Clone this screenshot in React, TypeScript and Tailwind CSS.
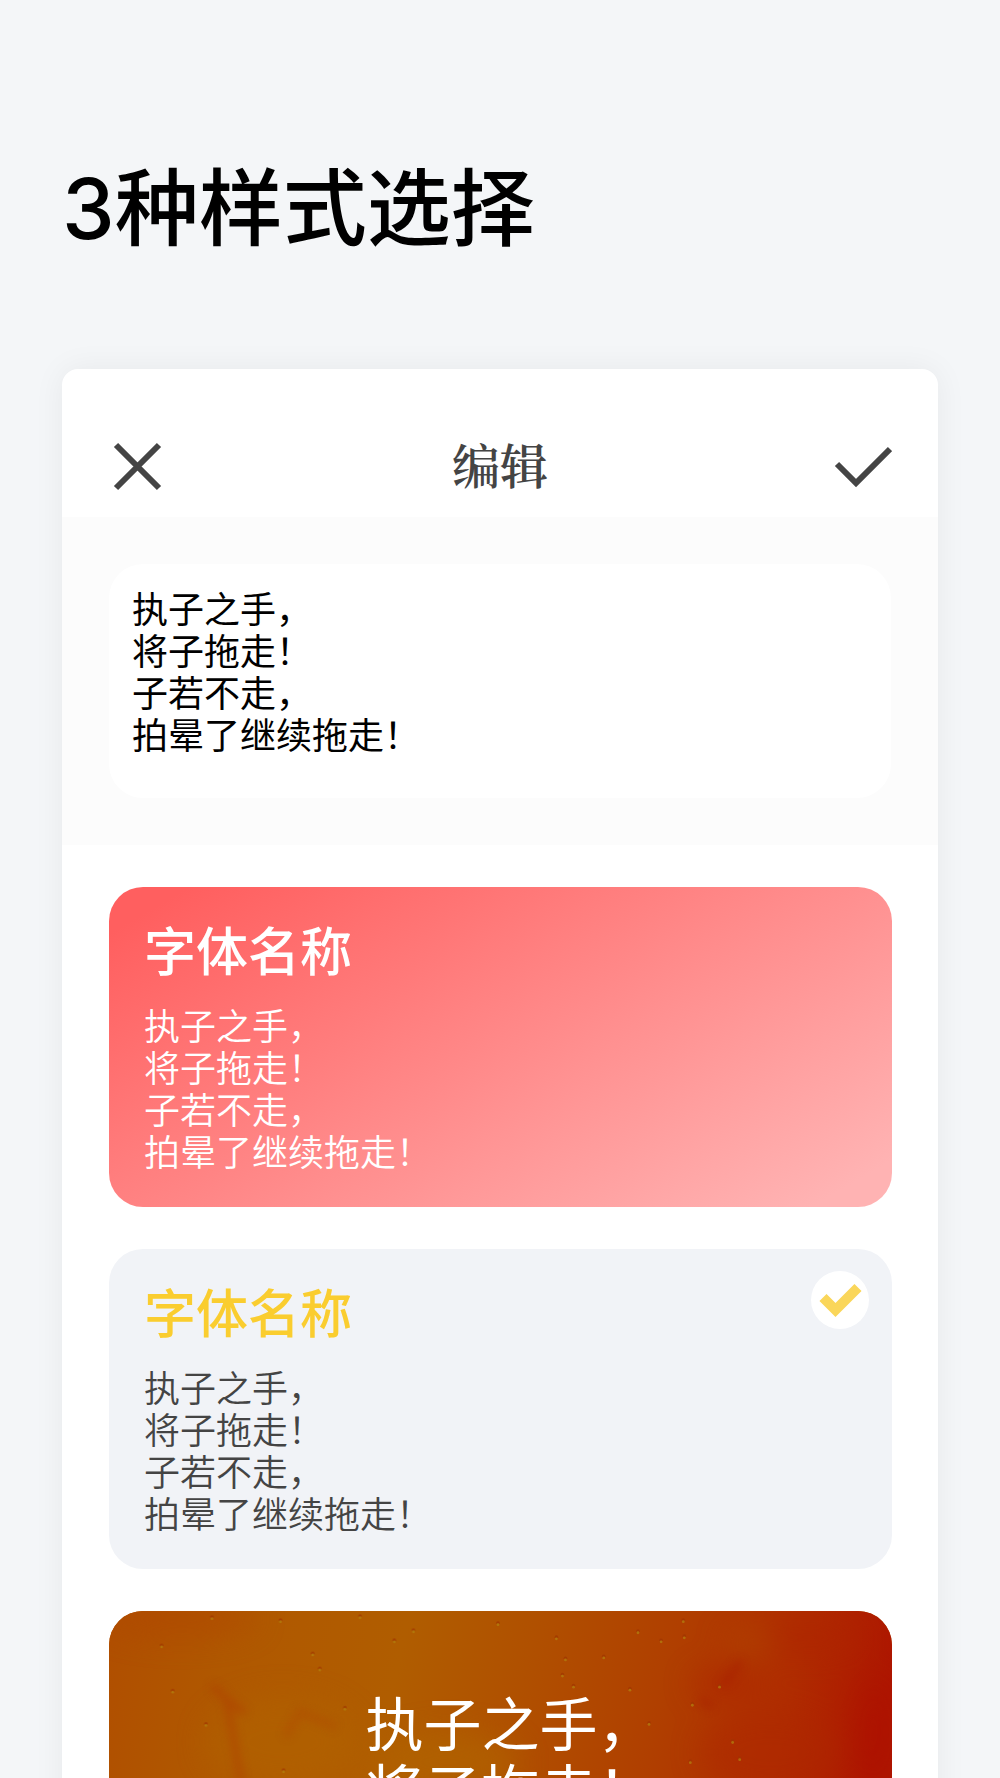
import { useState } from 'react';

const POEM = '执子之手，\n将子拖走！\n子若不走，\n拍晕了继续拖走！';

// air bubbles on the amber photo: x, y
const BUBBLES = [
    [55, 35], [105, 7], [173, 10], [205, 43], [212, 58], [66, 80], [99, 113], [237, 97],
    [176, 159], [252, 6], [305, 20], [286, 30], [389, 13], [447, 27], [528, 21], [573, 10],
    [574, 26], [551, 30], [494, 46], [456, 48], [453, 64], [464, 75], [520, 78], [609, 75],
    [539, 112], [580, 150], [629, 147], [622, 130], [582, 93],
];

interface StyleCardProps {
    value: string;
    label: string;
    selected: string;
    onSelect: (value: string) => void;
    className: string;
    children: React.ReactNode;
}

function StyleCard({value, label, selected, onSelect, className, children}: StyleCardProps) {
    return (
        <label className={`relative block cursor-pointer overflow-hidden rounded-[34px] ${className}`}>
            <input
                type="radio"
                name="style"
                value={value}
                aria-label={label}
                checked={selected === value}
                onChange={() => onSelect(value)}
                className="sr-only"
            />
            {children}
            {selected === value && (
                <span className="absolute right-[23px] top-[22px] size-[58px] rounded-full bg-white">
                    <svg viewBox="0 0 58 58" className="size-full" fill="none" stroke="#fad65a" strokeWidth="10">
                        <path d="M12 26.5 24.5 39 47 16.5" />
                    </svg>
                </span>
            )}
        </label>
    );
}

function AmberTexture() {
    return (
        <svg
            viewBox="0 0 783 420"
            preserveAspectRatio="xMidYMin slice"
            className="absolute inset-0 size-full"
            aria-hidden="true"
        >
            <defs>
                <linearGradient id="amber" x1="0" y1="0" x2="1" y2="0.12">
                    <stop offset="0" stopColor="#b04e00" />
                    <stop offset="0.16" stopColor="#b05800" />
                    <stop offset="0.38" stopColor="#b05d00" />
                    <stop offset="0.54" stopColor="#b05000" />
                    <stop offset="0.72" stopColor="#b03f00" />
                    <stop offset="0.88" stopColor="#b02c00" />
                    <stop offset="1" stopColor="#ae1600" />
                </linearGradient>
                <filter id="soft" x="-20%" y="-20%" width="140%" height="140%" colorInterpolationFilters="sRGB">
                    <feGaussianBlur stdDeviation="14" />
                </filter>
                <filter id="vein" x="-20%" y="-20%" width="140%" height="140%" colorInterpolationFilters="sRGB">
                    <feGaussianBlur stdDeviation="4" />
                </filter>
            </defs>
            <rect width="783" height="420" fill="url(#amber)" />
            <g filter="url(#soft)">
                <ellipse cx="75" cy="8" rx="75" ry="18" fill="#b04600" opacity="0.5" />
                <ellipse cx="175" cy="130" rx="75" ry="45" fill="#b06300" opacity="0.6" />
                <ellipse cx="340" cy="150" rx="70" ry="30" fill="#b06500" opacity="0.6" />
                <ellipse cx="616" cy="72" rx="34" ry="16" fill="#ae2200" opacity="0.5" />
                <ellipse cx="660" cy="140" rx="70" ry="40" fill="#ae2700" opacity="0.5" />
                <ellipse cx="700" cy="26" rx="50" ry="18" fill="#ae2400" opacity="0.5" />
                <ellipse cx="640" cy="30" rx="26" ry="16" fill="#b04500" opacity="0.5" />
                <ellipse cx="762" cy="120" rx="18" ry="55" fill="#ae0d00" opacity="0.5" />
            </g>
            <g filter="url(#vein)" fill="none" stroke="#b03c00" strokeWidth="7" opacity="0.5">
                <path d="M105 74 122 90 138 101" />
                <path d="M120 90 126 125 134 170" />
                <path d="M178 125 192 100 228 115" opacity="0.6" />
                <path d="M590 88 602 95M612 74 630 50" stroke="#a81c00" strokeWidth="7" />
            </g>
            {BUBBLES.map(([x, y]) => (
                <g key={`${x}-${y}`} opacity="0.7">
                    <circle cx={x} cy={y - 1} r="1.8" fill="#a03600" />
                    <circle cx={x} cy={y + 0.6} r="1.4" fill="#b28410" />
                </g>
            ))}
        </svg>
    );
}

export default function App() {
    const [text, setText] = useState(POEM);
    const [selected, setSelected] = useState('light');

    return (
        <main className="flex h-screen flex-col overflow-hidden bg-[#f4f6f8] px-[62px] pt-[149px] font-['Noto_Sans_CJK_SC',sans-serif] text-[#444]">
            <h1 className="font-['Inter','Noto_Sans_CJK_SC',sans-serif] text-[84px] font-medium leading-[120px] text-black">
                3种样式选择
            </h1>
            <section className="mt-[100px] grow rounded-t-2xl bg-white shadow-[0_0_32px_rgba(0,0,0,0.06)]">
                <header className="flex h-[148px] items-center justify-between px-[46px] pt-[46px]">
                    <button type="button" aria-label="关闭" className="w-[58px]">
                        <svg viewBox="0 0 58 58" className="size-[58px]" fill="none" stroke="#444" strokeWidth="6">
                            <path d="M8 8 51 51M51 8 8 51" />
                        </svg>
                    </button>
                    <h2 className="pb-1 font-['Noto_Serif_CJK_SC','Noto_Sans_CJK_SC',serif] text-[48px] font-semibold leading-[60px]">
                        编辑
                    </h2>
                    <button type="button" aria-label="完成" className="w-[58px]">
                        <svg viewBox="0 0 58 58" className="size-[58px]" fill="none" stroke="#444" strokeWidth="6">
                            <path d="M3 27 22 46 56 12" />
                        </svg>
                    </button>
                </header>
                <div className="bg-[#fcfcfc] px-[47px] py-[47px]">
                    <textarea
                        aria-label="文字内容"
                        value={text}
                        onChange={(e) => setText(e.target.value)}
                        className="block h-[234px] w-full resize-none overflow-hidden rounded-[34px] bg-white px-[23px] py-[22px] text-[36px] font-normal leading-[42px] text-black outline-none"
                    />
                </div>
                <div className="flex flex-col gap-[42px] pl-[47px] pr-[46px] pt-[42px]">
                    <StyleCard
                        value="gradient"
                        label="渐变样式"
                        selected={selected}
                        onSelect={setSelected}
                        className="bg-[linear-gradient(150deg,#ff5f5f_6%,#ffb3b3_94%)] px-[35px] pb-9 pt-8 text-white"
                    >
                        <h3 className="text-[52px] font-medium leading-[60px]">字体名称</h3>
                        <p className="mt-6 whitespace-pre-line text-[36px] font-[350] leading-[42px]">{text}</p>
                    </StyleCard>
                    <StyleCard
                        value="light"
                        label="浅色样式"
                        selected={selected}
                        onSelect={setSelected}
                        className="bg-[#f1f3f7] px-[35px] pb-9 pt-8"
                    >
                        <h3 className="text-[52px] font-medium leading-[60px] text-[#facd2f]">字体名称</h3>
                        <p className="mt-6 whitespace-pre-line text-[36px] font-[350] leading-[42px]">{text}</p>
                    </StyleCard>
                    <StyleCard
                        value="photo"
                        label="图片样式"
                        selected={selected}
                        onSelect={setSelected}
                        className="bg-[#b05000] pb-[78px] pl-14 pr-9 pt-[77px] text-white"
                    >
                        <AmberTexture />
                        <p className="relative whitespace-pre-line text-center text-[58px] leading-[67px]">{text}</p>
                    </StyleCard>
                </div>
            </section>
        </main>
    );
}
